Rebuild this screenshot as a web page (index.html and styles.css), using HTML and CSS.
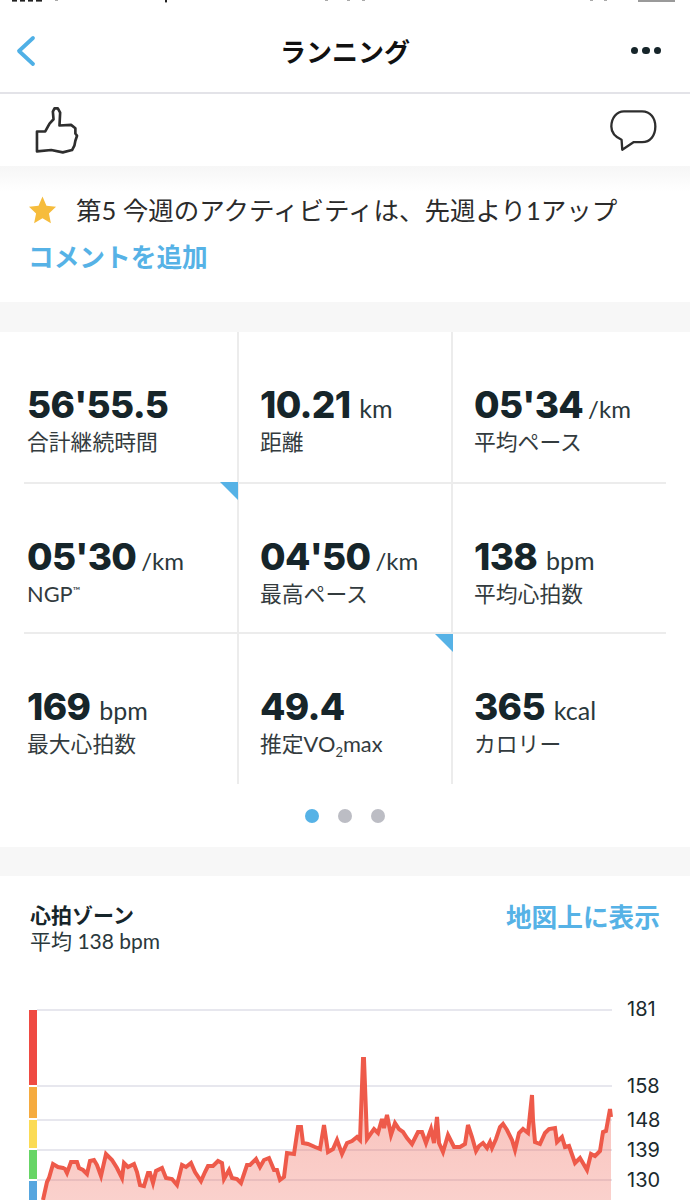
FILE: index.html
```html
<!DOCTYPE html>
<html lang="ja">
    <head>
        <meta charset="utf-8">
        <title>ランニング</title>
        <link rel="stylesheet" href="styles.css">
    </head>
    <body>
      <!-- what is left of the status bar at the very top -->
      <svg class="status-strip" viewBox="0 0 690 3">
        <rect x="12" y="0" width="5" height="1.6"/>
        <rect x="20" y="0" width="5" height="1.6"/>
        <rect x="28" y="0" width="5" height="1.6"/>
        <rect x="36" y="0" width="6" height="1.6"/>
        <rect x="165" y="0" width="2" height="2.4"/>
        <rect class="status-dim" x="55" y="0" width="3" height="1"/>
        <rect class="status-dim" x="325" y="0" width="3" height="1"/>
        <rect class="status-dim" x="347" y="0" width="3" height="1"/>
        <rect class="status-dim" x="362" y="0" width="3" height="1"/>
        <rect class="status-dim" x="590" y="0" width="3" height="1"/>
        <rect class="status-dim" x="604" y="0" width="3" height="1"/>
        <rect class="status-batt" x="638" y="0" width="37" height="2"/>
      </svg>

      <div class="nav-bar">
        <svg class="back-icon" viewBox="0 0 24 34">
          <path d="M20 4 L6 17 L20 30"/>
        </svg>
        <h1 class="nav-title">ランニング</h1>
        <div class="more-dots"><span></span><span></span><span></span></div>
      </div>

      <div class="action-row">
        <svg class="thumb-icon" viewBox="100 40 145 155">
          <path d="M112 122 L137 122 L150 98 L162 85 L160 62 L165 52 L175 52 L182 65 L180 104 L215 102 L228 112 L228 128 L233 135 L228 150 L225 165 L218 178 L190 185 L155 178 L112 182 Z"/>
        </svg>
        <svg class="bubble-icon" viewBox="55 265 148 130">
          <path d="M100 272 H155 C180 272 195 292 195 318 C195 345 180 365 155 365 H130 L95 388 L93 358 C75 350 62 335 62 318 C62 292 78 272 100 272 Z"/>
        </svg>
      </div>

      <div class="notice">
        <div class="notice-line">
          <svg class="star-icon" viewBox="0 0 24 24">
            <path d="M12 0.5 L15.4 8.3 L23.6 9.2 L17.5 14.9 L19.2 23.4 L12 19 L4.8 23.4 L6.5 14.9 L0.4 9.2 L8.6 8.3 Z"/>
          </svg>
          <span>第5 今週のアクティビティは、先週より1アップ</span>
        </div>
        <a class="add-comment">コメントを追加</a>
      </div>

      <div class="band"></div>

      <div class="stats">
        <div class="stat">
          <div class="stat-value">56'55.5</div>
          <div class="stat-label">合計継続時間</div>
        </div>
        <div class="stat">
          <div class="stat-value">10.21<small>km</small></div>
          <div class="stat-label">距離</div>
        </div>
        <div class="stat">
          <div class="stat-value">05'34<small class="pace">/km</small></div>
          <div class="stat-label">平均ペース</div>
        </div>
        <div class="stat stat-flag">
          <div class="stat-value">05'30<small class="pace">/km</small></div>
          <div class="stat-label">NGP<sup>™</sup></div>
        </div>
        <div class="stat">
          <div class="stat-value">04'50<small class="pace">/km</small></div>
          <div class="stat-label">最高ペース</div>
        </div>
        <div class="stat">
          <div class="stat-value">138<small>bpm</small></div>
          <div class="stat-label">平均心拍数</div>
        </div>
        <div class="stat">
          <div class="stat-value">169<small>bpm</small></div>
          <div class="stat-label">最大心拍数</div>
        </div>
        <div class="stat stat-flag">
          <div class="stat-value">49.4</div>
          <div class="stat-label">推定VO<sub>2</sub>max</div>
        </div>
        <div class="stat">
          <div class="stat-value">365<small>kcal</small></div>
          <div class="stat-label">カロリー</div>
        </div>
      </div>

      <div class="pager"><span class="on"></span><span></span><span></span></div>

      <div class="band band-thin"></div>

      <div class="zone-head">
        <div>
          <h2 class="zone-title">心拍ゾーン</h2>
          <div class="zone-avg">平均 138 bpm</div>
        </div>
        <a class="zone-link">地図上に表示</a>
      </div>

      <svg class="hr-chart" viewBox="0 990 690 210">
        <defs>
          <linearGradient id="hrFill" x1="0" y1="0" x2="0" y2="1">
            <stop offset="0" stop-color="#ee5a4a" stop-opacity="0.4"/>
            <stop offset="1" stop-color="#ee5a4a" stop-opacity="0.28"/>
          </linearGradient>
        </defs>
        <line class="grid" x1="37" y1="1010" x2="612" y2="1010"/>
        <line class="grid" x1="37" y1="1086" x2="612" y2="1086"/>
        <line class="grid" x1="37" y1="1120" x2="612" y2="1120"/>
        <line class="grid" x1="37" y1="1150" x2="612" y2="1150"/>
        <line class="grid" x1="37" y1="1180" x2="612" y2="1180"/>

        <rect class="zone-5" x="29" y="1010" width="8" height="75"/>
        <rect class="zone-4" x="29" y="1087" width="8" height="31"/>
        <rect class="zone-3" x="29" y="1120" width="8" height="28"/>
        <rect class="zone-2" x="29" y="1150" width="8" height="29"/>
        <rect class="zone-1" x="29" y="1181" width="8" height="19"/>

        <polygon class="hr-area" fill="url(#hrFill)" points="43,1200 47,1182 49,1178 53,1164 58,1167 63,1168 65,1169 67,1173 71,1162 77,1162 79,1168 83,1170 87,1174 90,1161 94,1160 97,1165 101,1176 106,1154 112,1160 117,1168 122,1178 124,1163 128,1167 134,1164 137,1172 140,1185 144,1186 148,1173 150,1173 153,1183 156,1171 162,1168 166,1178 172,1179 177,1185 182,1165 186,1167 191,1163 195,1172 201,1181 205,1172 208,1166 213,1166 218,1161 222,1163 224,1179 229,1170 232,1178 237,1179 241,1183 247,1165 250,1165 256,1159 260,1167 264,1160 269,1158 274,1170 277,1170 280,1180 284,1177 287,1153 294,1154 298,1127 301,1127 303,1143 308,1144 315,1147 320,1149 324,1125 328,1152 333,1149 337,1140 342,1154 347,1143 352,1141 357,1137 360,1140 363,1059 364,1059 367,1139 374,1129 378,1133 382,1119 384,1128 387,1115 391,1135 395,1123 399,1129 403,1132 407,1138 412,1144 418,1132 422,1132 426,1143 431,1129 434,1143 437,1117 439,1143 443,1152 448,1135 454,1147 460,1147 465,1144 468,1125 472,1137 476,1151 479,1146 483,1143 487,1148 490,1142 492,1148 496,1139 500,1127 503,1124 507,1130 512,1140 515,1150 519,1133 523,1129 528,1133 532,1095 533,1120 535,1142 540,1144 545,1133 549,1129 555,1128 557,1142 562,1137 565,1147 569,1146 575,1163 580,1158 587,1170 591,1154 595,1156 600,1151 603,1132 606,1131 610,1109 611,1117 611,1200"/>
        <polyline class="hr-line" points="43,1200 47,1182 49,1178 53,1164 58,1167 63,1168 65,1169 67,1173 71,1162 77,1162 79,1168 83,1170 87,1174 90,1161 94,1160 97,1165 101,1176 106,1154 112,1160 117,1168 122,1178 124,1163 128,1167 134,1164 137,1172 140,1185 144,1186 148,1173 150,1173 153,1183 156,1171 162,1168 166,1178 172,1179 177,1185 182,1165 186,1167 191,1163 195,1172 201,1181 205,1172 208,1166 213,1166 218,1161 222,1163 224,1179 229,1170 232,1178 237,1179 241,1183 247,1165 250,1165 256,1159 260,1167 264,1160 269,1158 274,1170 277,1170 280,1180 284,1177 287,1153 294,1154 298,1127 301,1127 303,1143 308,1144 315,1147 320,1149 324,1125 328,1152 333,1149 337,1140 342,1154 347,1143 352,1141 357,1137 360,1140 363,1059 364,1059 367,1139 374,1129 378,1133 382,1119 384,1128 387,1115 391,1135 395,1123 399,1129 403,1132 407,1138 412,1144 418,1132 422,1132 426,1143 431,1129 434,1143 437,1117 439,1143 443,1152 448,1135 454,1147 460,1147 465,1144 468,1125 472,1137 476,1151 479,1146 483,1143 487,1148 490,1142 492,1148 496,1139 500,1127 503,1124 507,1130 512,1140 515,1150 519,1133 523,1129 528,1133 532,1095 533,1120 535,1142 540,1144 545,1133 549,1129 555,1128 557,1142 562,1137 565,1147 569,1146 575,1163 580,1158 587,1170 591,1154 595,1156 600,1151 603,1132 606,1131 610,1109 611,1117"/>

        <text class="axis" x="627" y="1016">181</text>
        <text class="axis" x="627" y="1093">158</text>
        <text class="axis" x="627" y="1127">148</text>
        <text class="axis" x="627" y="1157">139</text>
        <text class="axis" x="627" y="1187">130</text>
      </svg>
    </body>
</html>
```

FILE: styles.css
```css
html, body {
  margin: 0px;
  background-color: #ffffff;
  overflow: hidden;
}
body {
  width: 690px;
  height: 1200px;
  color: #1b2a2e;
  font-family: "Lato", "Noto Sans CJK JP", sans-serif;
}
.status-strip {
  display: block;
  width: 690px;
  height: 3px;
  fill: #222222;
}
.status-dim {
  fill: #aaaaaa;
}
.status-batt {
  fill: #9a9a9a;
}

/* top bar */
.nav-bar {
  height: 83px;
  padding: 6px 29px 0px 13px;
  display: grid;
  grid-template-columns: 1fr auto 1fr;
  align-items: center;
  border-bottom: 2px solid #e3e3e8;
}
.back-icon {
  width: 24px;
  height: 34px;
  fill: none;
  stroke: #4fb0e6;
  stroke-width: 3.8;
  stroke-linecap: round;
  stroke-linejoin: round;
}
.nav-title {
  margin: 0px;
  font-size: 26px;
  font-weight: 700;
  color: #111111;
  font-family: "Noto Sans CJK JP", sans-serif;
  position: relative;
  left: 8px;
}
.more-dots {
  display: flex;
  gap: 4px;
  justify-content: flex-end;
}
.more-dots span {
  width: 7.5px;
  height: 7.5px;
  border-radius: 50%;
  background-color: #16252a;
}

/* like + comment */
.action-row {
  height: 72px;
  padding: 0px 32px 0px 33px;
  display: flex;
  align-items: center;
  justify-content: space-between;
}
.thumb-icon {
  width: 48px;
  height: 52px;
  fill: none;
  stroke: #2e2e2e;
  stroke-width: 8;
  stroke-linejoin: round;
}
.bubble-icon {
  width: 49px;
  height: 43px;
  fill: none;
  stroke: #2e2e2e;
  stroke-width: 7;
  stroke-linejoin: round;
}

.notice {
  height: 136px;
  padding: 28px 28px 0px;
  box-sizing: border-box;
  background: linear-gradient(#f6f6f6, #ffffff 26px);
}
.notice-line {
  display: flex;
  align-items: center;
  gap: 19px;
  font-size: 25.5px;
  line-height: 32px;
  color: #2b2b2b;
}
.star-icon {
  width: 29px;
  height: 28px;
  fill: #f6bc3c;
}
.add-comment {
  display: block;
  margin-top: 14px;
  font-size: 25.7px;
  line-height: 32px;
  font-weight: 700;
  color: #56b2e6;
  font-family: "Noto Sans CJK JP", sans-serif;
}
.band {
  height: 30px;
  background-color: #f7f7f7;
}
.band-thin {
  height: 29px;
}

/* stats table */
.stats {
  display: grid;
  grid-template-columns: 215px 214px 213px;
  grid-template-rows: 152px 150px 150px;
  padding: 0px 24px;
}
.stat {
  position: relative;
  padding: 52px 0px 0px 21px;
  box-sizing: border-box;
  border-right: 2px solid #ececec;
  border-bottom: 2px solid #ececec;
}
.stat:nth-child(3n) {
  border-right: none;
}
.stat:nth-child(3n+1) {
  padding-left: 3px;
}
.stat:nth-child(n+7) {
  border-bottom: none;
}
/* blue corner on cells that have more info */
.stat-flag::after {
  content: "";
  position: absolute;
  right: -2px;
  top: 0px;
  width: 18px;
  height: 18px;
  background-color: #56b2e6;
  clip-path: polygon(0 0, 100% 0, 100% 100%);
}
.stat:nth-child(4)::after {
  top: -2px;
  right: auto;
  left: 196px;
}
.stat:nth-child(8)::after {
  top: 0px;
}
.stat-value {
  font-family: "Inter", "Lato", sans-serif;
  font-size: 37px;
  line-height: 42px;
  font-weight: 800;
  letter-spacing: -0.7px;
  color: #16252a;
  white-space: nowrap;
}
.stat-value small {
  margin-left: 9px;
  font-family: "Lato", sans-serif;
  font-size: 25px;
  line-height: 0px;
  font-weight: 400;
  letter-spacing: 0px;
  color: #2a383c;
}
.stat-value small.pace {
  margin-left: 5px;
  font-size: 24px;
}
.stat-label {
  margin-top: 2px;
  font-size: 21.8px;
  line-height: 28px;
  color: #333b3e;
}
.stat-label sup {
  font-size: 10px;
  line-height: 0px;
}
.stat-label sub {
  font-size: 13px;
  line-height: 0px;
}

.pager {
  height: 63px;
  display: flex;
  align-items: center;
  justify-content: center;
  gap: 19px;
}
.pager span {
  width: 14px;
  height: 14px;
  border-radius: 50%;
  background-color: #bcbdc4;
}
.pager .on {
  background-color: #56b2e6;
}

/* heart rate section */
.zone-head {
  height: 114px;
  padding: 24px 30px 0px;
  box-sizing: border-box;
  display: flex;
  justify-content: space-between;
  align-items: flex-start;
}
.zone-title {
  margin: 0px;
  font-size: 21px;
  line-height: 28px;
  font-weight: 700;
  color: #16252a;
  font-family: "Noto Sans CJK JP", sans-serif;
}
.zone-avg {
  font-size: 21px;
  line-height: 26px;
  color: #2a383c;
}
.zone-link {
  font-size: 25.7px;
  line-height: 32px;
  font-weight: 700;
  color: #56b2e6;
  font-family: "Noto Sans CJK JP", sans-serif;
}
.hr-chart {
  display: block;
  width: 690px;
  height: 210px;
}
.grid {
  stroke: #e7e7ee;
  stroke-width: 2;
}
.zone-5 { fill: #ef4a42; }
.zone-4 { fill: #f5ab3f; }
.zone-3 { fill: #fbdb55; }
.zone-2 { fill: #67d566; }
.zone-1 { fill: #56a6df; }
.hr-line {
  fill: none;
  stroke: #ee5a4a;
  stroke-width: 4;
  stroke-linejoin: miter;
}
.axis {
  font-family: "Inter", sans-serif;
  font-size: 20px;
  fill: #1b2a2e;
}
```
